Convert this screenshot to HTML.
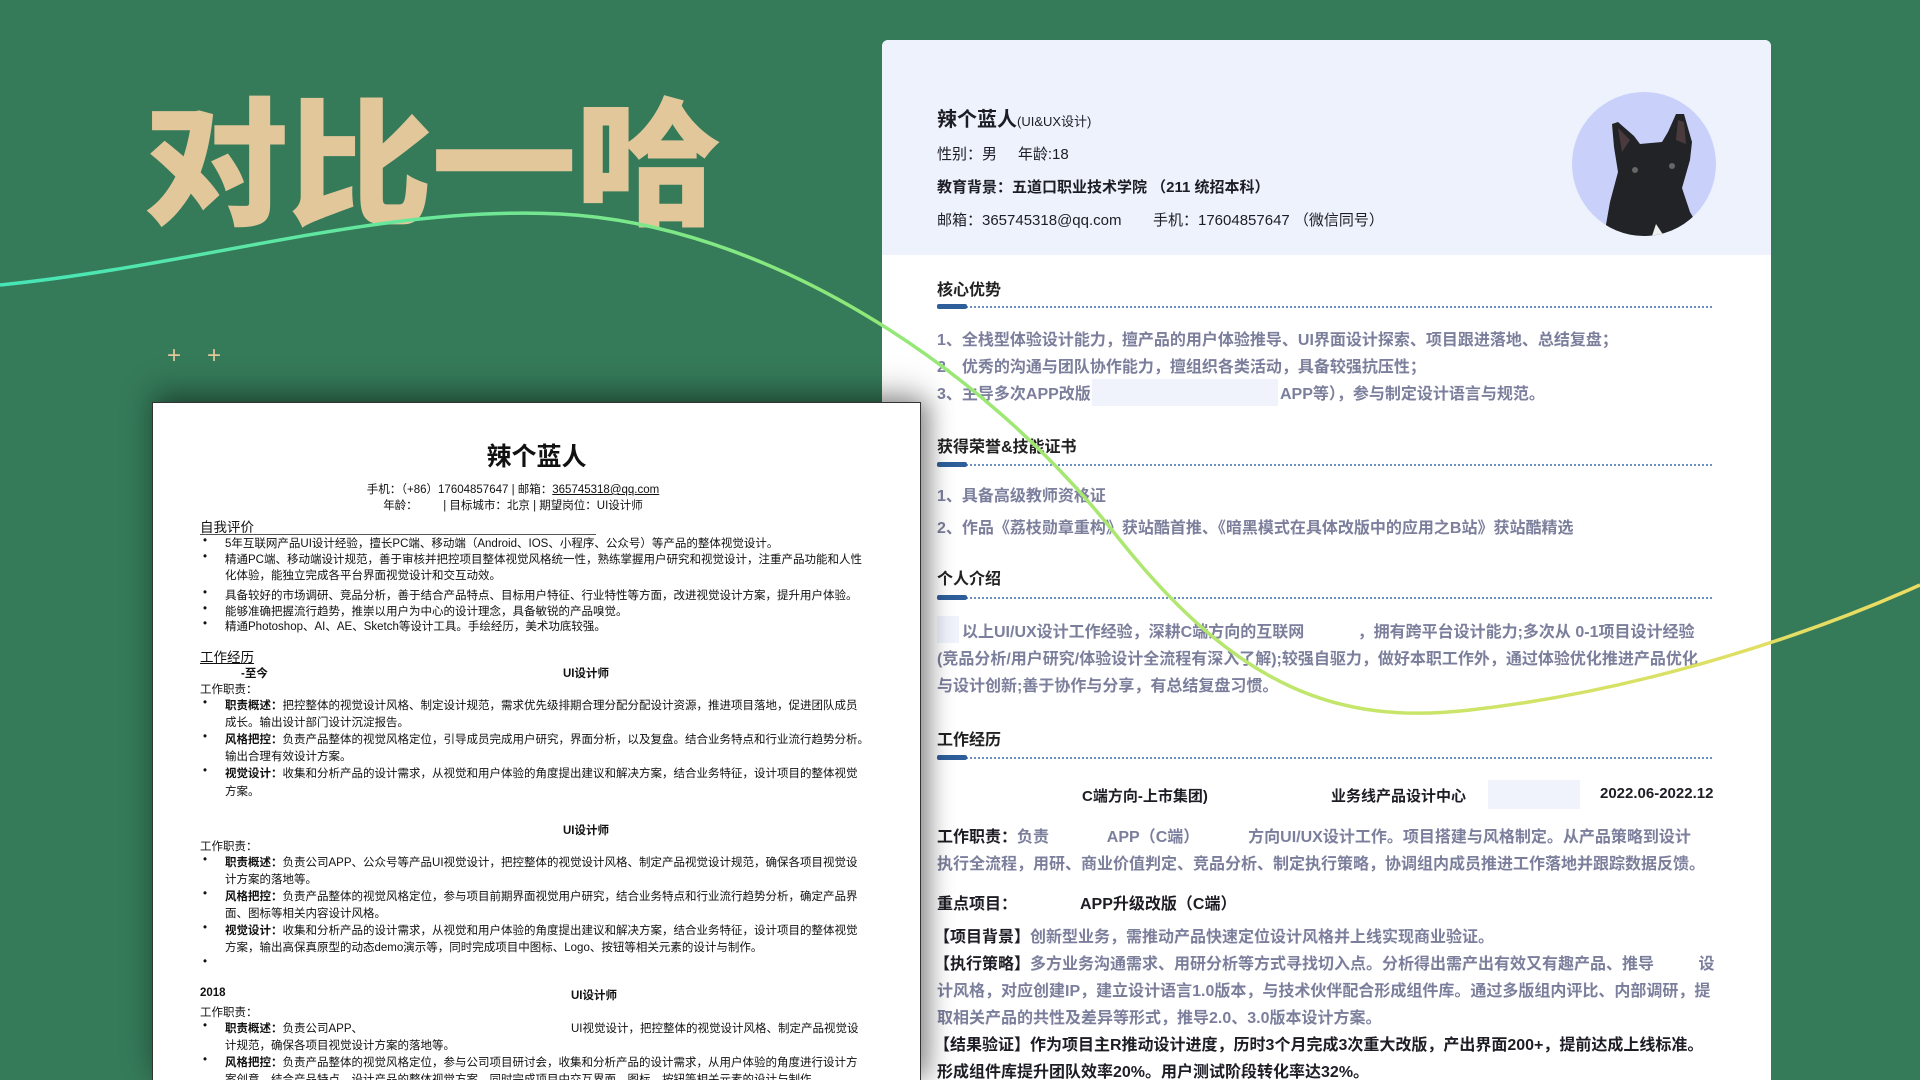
<!DOCTYPE html>
<html><head><meta charset="utf-8"><style>
*{margin:0;padding:0;box-sizing:border-box}
html{width:1920px;height:1080px;overflow:hidden}
body{width:1920px;height:1080px;overflow:hidden;background:#357a59;position:relative;font-family:"Liberation Sans","Noto Sans CJK SC",sans-serif}
.abs{position:absolute;white-space:nowrap}
.title{left:143px;top:86px;font-size:146px;font-weight:900;color:#e2c79b;letter-spacing:-2px;font-family:"Noto Sans CJK SC",sans-serif;transform:scaleY(0.95);transform-origin:top left;line-height:1}
.plus{color:#e2c79b;font-size:24px;top:342px}
#rc{position:absolute;left:882px;top:40px;width:889px;height:1040px;background:#fff;border-radius:6px 6px 0 0;overflow:hidden}
#hd{position:absolute;left:0;top:0;width:889px;height:215px;background:#eef2fd;border-radius:6px 6px 0 0}
.k{color:#1d1d25;font-size:16px;font-weight:bold}
.g{color:#7c7f9c;font-size:16px;font-weight:bold}
.sec{font-size:16px;font-weight:bold;color:#222}
.ln{position:absolute;left:55px;width:775px;height:0;border-top:2px dotted #6b8fc0}
.bar{position:absolute;left:55px;width:30px;height:5px;background:#2f5f9a;border-radius:2px}
.blank{position:absolute;background:#f0f3fc}
#lc{position:absolute;left:152px;top:402px;width:769px;height:678px;background:#fff;border:1px solid #333;border-bottom:none;box-shadow:8px 0 22px rgba(0,0,0,.35),0 -12px 30px rgba(0,0,0,.25);color:#111;overflow:hidden}
#lc .abs{font-size:11.5px}
.b{font-weight:bold}
</style></head><body>
<div class="abs title">对比一哈</div>
<div class="abs plus" style="left:167px">+</div>
<div class="abs plus" style="left:207px">+</div>

<div id="rc">
<div id="hd"></div>
<svg style="position:absolute;left:690px;top:52px" width="144" height="144" viewBox="0 0 144 144">
<circle cx="72" cy="72" r="72" fill="#c9d1fb"/>
<clipPath id="c"><circle cx="72" cy="72" r="72"/></clipPath>
<g clip-path="url(#c)">
<path d="M32 144 L38 110 L46 80 L42 55 L40 32 L46 30 L62 44 L68 52 L90 50 L96 40 L104 22 L112 22 L120 50 L118 68 L110 96 L118 120 L132 144 Z" fill="#222326"/>
<path d="M46 36 L58 48 L50 60 Z M106 28 L112 30 L114 52 L104 48 Z" fill="#4a3a3e"/>
<path d="M84 132 L92 144 L80 144 Z" fill="#eee"/>
<circle cx="63" cy="78" r="3" fill="#666"/><circle cx="100" cy="74" r="3" fill="#666"/>
</g></svg>
<div class="abs k" style="left:55px;top:63px;font-size:20px">辣个蓝人<span style="font-size:13px;font-weight:normal">(UI&amp;UX设计)</span></div>
<div class="abs k" style="left:55px;top:103px;font-weight:normal;font-size:15px">性别：男 &nbsp;&nbsp;&nbsp;&nbsp;年龄:18</div>
<div class="abs k" style="left:55px;top:136px;font-size:15px">教育背景：五道口职业技术学院 （211 统招本科）</div>
<div class="abs k" style="left:55px;top:169px;font-weight:normal;font-size:15px">邮箱：365745318@qq.com</div>
<div class="abs k" style="left:271px;top:169px;font-weight:normal;font-size:15px">手机：17604857647 （微信同号）</div>

<div class="abs sec" style="left:55px;top:236px">核心优势</div>
<div class="ln" style="top:266px"></div><div class="bar" style="top:264px"></div>
<div class="abs g" style="left:55px;top:286px">1、全栈型体验设计能力，擅产品的用户体验推导、UI界面设计探索、项目跟进落地、总结复盘；</div>
<div class="abs g" style="left:55px;top:313px">2、优秀的沟通与团队协作能力，擅组织各类活动，具备较强抗压性；</div>
<div class="abs g" style="left:55px;top:340px">3、主导多次APP改版</div>
<div class="blank" style="left:210px;top:339px;width:186px;height:27px"></div>
<div class="abs g" style="left:398px;top:340px">APP等），参与制定设计语言与规范。</div>

<div class="abs sec" style="left:55px;top:393px">获得荣誉&amp;技能证书</div>
<div class="ln" style="top:424px"></div><div class="bar" style="top:422px"></div>
<div class="abs g" style="left:55px;top:442px">1、具备高级教师资格证</div>
<div class="abs g" style="left:55px;top:474px">2、作品《荔枝勋章重构》获站酷首推、《暗黑模式在具体改版中的应用之B站》获站酷精选</div>

<div class="abs sec" style="left:55px;top:525px">个人介绍</div>
<div class="ln" style="top:557px"></div><div class="bar" style="top:555px"></div>
<div class="blank" style="left:55px;top:576px;width:22px;height:27px"></div>
<div class="abs g" style="left:80px;top:578px">以上UI/UX设计工作经验，深耕C端方向的互联网 &nbsp;&nbsp;&nbsp;&nbsp;&nbsp;&nbsp;&nbsp;&nbsp;&nbsp;&nbsp;&nbsp;，拥有跨平台设计能力;多次从 0-1项目设计经验</div>
<div class="abs g" style="left:55px;top:605px">(竞品分析/用户研究/体验设计全流程有深入了解);较强自驱力，做好本职工作外，通过体验优化推进产品优化</div>
<div class="abs g" style="left:55px;top:632px">与设计创新;善于协作与分享，有总结复盘习惯。</div>

<div class="abs sec" style="left:55px;top:686px">工作经历</div>
<div class="ln" style="top:717px"></div><div class="bar" style="top:715px"></div>
<div class="abs k" style="left:200px;top:745px;font-size:15px">C端方向-上市集团)</div>
<div class="abs k" style="left:449px;top:745px;font-size:15px">业务线产品设计中心</div>
<div class="blank" style="left:606px;top:740px;width:92px;height:29px"></div>
<div class="abs k" style="left:718px;top:745px;font-size:15px">2022.06-2022.12</div>
<div class="abs g" style="left:55px;top:783px"><span style="color:#1d1d25">工作职责：</span>负责 &nbsp;&nbsp;&nbsp;&nbsp;&nbsp;&nbsp;&nbsp;&nbsp;&nbsp;&nbsp;&nbsp;&nbsp;APP（C端） &nbsp;&nbsp;&nbsp;&nbsp;&nbsp;&nbsp;&nbsp;&nbsp;&nbsp;&nbsp;方向UI/UX设计工作。项目搭建与风格制定。从产品策略到设计</div>
<div class="abs g" style="left:55px;top:810px">执行全流程，用研、商业价值判定、竞品分析、制定执行策略，协调组内成员推进工作落地并跟踪数据反馈。</div>
<div class="abs k" style="left:55px;top:850px">重点项目：</div>
<div class="abs k" style="left:198px;top:850px">APP升级改版（C端）</div>
<div class="abs g" style="left:52px;top:883px"><span style="color:#1d1d25">【项目背景】</span>创新型业务，需推动产品快速定位设计风格并上线实现商业验证。</div>
<div class="abs g" style="left:52px;top:910px"><span style="color:#1d1d25">【执行策略】</span>多方业务沟通需求、用研分析等方式寻找切入点。分析得出需产出有效又有趣产品、推导 &nbsp;&nbsp;&nbsp;&nbsp;&nbsp;&nbsp;&nbsp;&nbsp;&nbsp;设</div>
<div class="abs g" style="left:55px;top:937px">计风格，对应创建IP，建立设计语言1.0版本，与技术伙伴配合形成组件库。通过多版组内评比、内部调研，提</div>
<div class="abs g" style="left:55px;top:964px">取相关产品的共性及差异等形式，推导2.0、3.0版本设计方案。</div>
<div class="abs k" style="left:52px;top:991px">【结果验证】作为项目主R推动设计进度，历时3个月完成3次重大改版，产出界面200+，提前达成上线标准。</div>
<div class="abs k" style="left:55px;top:1018px">形成组件库提升团队效率20%。用户测试阶段转化率达32%。</div>
</div>

<svg style="position:absolute;left:0;top:0" width="1920" height="1080">
<defs><linearGradient id="lg" x1="0" y1="0" x2="1920" y2="0" gradientUnits="userSpaceOnUse">
<stop offset="0" stop-color="#45e6b8"/><stop offset="0.45" stop-color="#8fe878"/><stop offset="0.7" stop-color="#c4e66a"/><stop offset="1" stop-color="#ecdc62"/></linearGradient></defs>
<path d="M0 285 C200 265 380 205 560 214 C760 224 980 360 1120 540 C1240 690 1340 725 1470 710 C1650 690 1820 630 1920 585" fill="none" stroke="url(#lg)" stroke-width="3.5"/>
</svg>

<div id="lc">
<div class="abs b" style="left:0;width:767px;text-align:center;top:34px;font-size:25px!important">辣个蓝人</div>
<div class="abs" style="left:0;width:720px;text-align:center;top:78px">手机：（+86）17604857647 | 邮箱：<u>365745318@qq.com</u></div>
<div class="abs" style="left:0;width:720px;text-align:center;top:94px">年龄： &nbsp;&nbsp;&nbsp;&nbsp;&nbsp;&nbsp;&nbsp;| 目标城市：北京 | 期望岗位：UI设计师</div>
<div class="abs" style="left:47px;top:113px;font-size:13.5px!important">自我评价</div>
<div style="position:absolute;left:47px;top:131px;width:396px;border-top:1px solid #555"></div>
<div class="abs" style="left:50px;top:132px">•</div><div class="abs" style="left:72px;top:132px">5年互联网产品UI设计经验，擅长PC端、移动端（Android、IOS、小程序、公众号）等产品的整体视觉设计。</div>
<div class="abs" style="left:50px;top:148px">•</div><div class="abs" style="left:72px;top:148px">精通PC端、移动端设计规范，善于审核并把控项目整体视觉风格统一性，熟练掌握用户研究和视觉设计，注重产品功能和人性</div>
<div class="abs" style="left:72px;top:164px">化体验，能独立完成各平台界面视觉设计和交互动效。</div>
<div class="abs" style="left:50px;top:184px">•</div><div class="abs" style="left:72px;top:184px">具备较好的市场调研、竞品分析，善于结合产品特点、目标用户特征、行业特性等方面，改进视觉设计方案，提升用户体验。</div>
<div class="abs" style="left:50px;top:200px">•</div><div class="abs" style="left:72px;top:200px">能够准确把握流行趋势，推崇以用户为中心的设计理念，具备敏锐的产品嗅觉。</div>
<div class="abs" style="left:50px;top:215px">•</div><div class="abs" style="left:72px;top:215px">精通Photoshop、AI、AE、Sketch等设计工具。手绘经历，美术功底较强。</div>
<div class="abs" style="left:47px;top:243px;font-size:13.5px!important;text-decoration:underline">工作经历</div>
<div class="abs b" style="left:88px;top:262px">-至今</div><div class="abs b" style="left:410px;top:262px">UI设计师</div>
<div class="abs" style="left:47px;top:278px">工作职责：</div>
<div class="abs" style="left:50px;top:294px">•</div><div class="abs" style="left:72px;top:294px"><b>职责概述：</b>把控整体的视觉设计风格、制定设计规范，需求优先级排期合理分配分配设计资源，推进项目落地，促进团队成员</div>
<div class="abs" style="left:72px;top:311px">成长。输出设计部门设计沉淀报告。</div>
<div class="abs" style="left:50px;top:328px">•</div><div class="abs" style="left:72px;top:328px"><b>风格把控：</b>负责产品整体的视觉风格定位，引导成员完成用户研究，界面分析，以及复盘。结合业务特点和行业流行趋势分析。</div>
<div class="abs" style="left:72px;top:345px">输出合理有效设计方案。</div>
<div class="abs" style="left:50px;top:362px">•</div><div class="abs" style="left:72px;top:362px"><b>视觉设计：</b>收集和分析产品的设计需求，从视觉和用户体验的角度提出建议和解决方案，结合业务特征，设计项目的整体视觉</div>
<div class="abs" style="left:72px;top:380px">方案。</div>
<div class="abs b" style="left:410px;top:419px">UI设计师</div>
<div class="abs" style="left:47px;top:435px">工作职责：</div>
<div class="abs" style="left:50px;top:451px">•</div><div class="abs" style="left:72px;top:451px"><b>职责概述：</b>负责公司APP、公众号等产品UI视觉设计，把控整体的视觉设计风格、制定产品视觉设计规范，确保各项目视觉设</div>
<div class="abs" style="left:72px;top:468px">计方案的落地等。</div>
<div class="abs" style="left:50px;top:485px">•</div><div class="abs" style="left:72px;top:485px"><b>风格把控：</b>负责产品整体的视觉风格定位，参与项目前期界面视觉用户研究，结合业务特点和行业流行趋势分析，确定产品界</div>
<div class="abs" style="left:72px;top:502px">面、图标等相关内容设计风格。</div>
<div class="abs" style="left:50px;top:519px">•</div><div class="abs" style="left:72px;top:519px"><b>视觉设计：</b>收集和分析产品的设计需求，从视觉和用户体验的角度提出建议和解决方案，结合业务特征，设计项目的整体视觉</div>
<div class="abs" style="left:72px;top:536px">方案，输出高保真原型的动态demo演示等，同时完成项目中图标、Logo、按钮等相关元素的设计与制作。</div>
<div class="abs" style="left:50px;top:553px">•</div>
<div class="abs b" style="left:47px;top:584px">2018</div><div class="abs b" style="left:418px;top:584px">UI设计师</div>
<div class="abs" style="left:47px;top:601px">工作职责：</div>
<div class="abs" style="left:50px;top:617px">•</div><div class="abs" style="left:72px;top:617px"><b>职责概述：</b>负责公司APP、</div><div class="abs" style="left:418px;top:617px">UI视觉设计，把控整体的视觉设计风格、制定产品视觉设</div>
<div class="abs" style="left:72px;top:634px">计规范，确保各项目视觉设计方案的落地等。</div>
<div class="abs" style="left:50px;top:651px">•</div><div class="abs" style="left:72px;top:651px"><b>风格把控：</b>负责产品整体的视觉风格定位，参与公司项目研讨会，收集和分析产品的设计需求，从用户体验的角度进行设计方</div>
<div class="abs" style="left:72px;top:668px">案创意，结合产品特点，设计产品的整体视觉方案，同时完成项目中交互界面、图标、按钮等相关元素的设计与制作。</div>
</div>
</body></html>
